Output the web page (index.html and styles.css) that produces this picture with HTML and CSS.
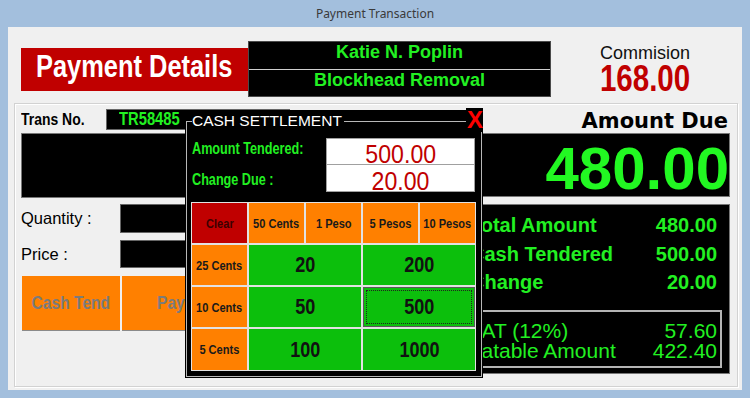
FILE: index.html
```html
<!DOCTYPE html>
<html>
<head>
<meta charset="utf-8">
<title>Payment Transaction</title>
<link rel="stylesheet" href="styles.css">
</head>
<body>
<div class="window">
  <div class="titlebar">Payment Transaction</div>
  <div class="client">
    <div class="header">
      <div class="title-box"><span class="sq sq-l">Payment Details</span></div>
      <div class="name-box">
        <div class="name-row r1">Katie N. Poplin</div>
        <div class="name-row r2">Blockhead Removal</div>
      </div>
      <div class="commission">
        <div class="comm-label">Commision</div>
        <div class="comm-value"><span class="sq">168.00</span></div>
      </div>
    </div>
    <div class="panel">
      <div class="left-col">
        <div class="trans-row">
          <span class="trans-label"><span class="sq sq-l">Trans No.</span></span>
          <div class="trans-box"><span class="sq sq-l">TR58485</span></div>
        </div>
        <div class="big-box"></div>
        <div class="field-row qty">
          <span class="field-label">Quantity :</span>
          <div class="field-box"></div>
        </div>
        <div class="field-row price">
          <span class="field-label">Price :</span>
          <div class="field-box"></div>
        </div>
        <div class="btn-row">
          <div class="obtn"><span class="sq">Cash Tend</span></div>
          <div class="obtn"><span class="sq">Pay</span></div>
        </div>
      </div>
      <div class="right-col">
        <div class="due-label">Amount Due</div>
        <div class="due-box">480.00</div>
        <div class="summary">
          <div class="sum-row"><span>Total Amount</span><span>480.00</span></div>
          <div class="sum-row"><span>Cash Tendered</span><span>500.00</span></div>
          <div class="sum-row"><span>Change</span><span>20.00</span></div>
          <div class="vat-frame">
            <div class="vat-row"><span>VAT (12%)</span><span>57.60</span></div>
            <div class="vat-row"><span>Vatable Amount</span><span>422.40</span></div>
          </div>
        </div>
      </div>
    </div>
    <div class="popup">
      <fieldset class="settle">
        <legend>CASH SETTLEMENT</legend>
        <div class="amt-row">
          <span class="amt-label"><span class="sq sq-l sq-t">Amount Tendered:</span></span>
          <div class="amt-box"><span class="sq sq-a">500.00</span></div>
        </div>
        <div class="amt-row second">
          <span class="amt-label"><span class="sq sq-l sq-t">Change Due :</span></span>
          <div class="amt-box"><span class="sq sq-a">20.00</span></div>
        </div>
        <div class="keypad">
          <div class="key clear"><span class="sq">Clear</span></div>
          <div class="key coin"><span class="sq">50 Cents</span></div>
          <div class="key coin"><span class="sq">1 Peso</span></div>
          <div class="key coin"><span class="sq">5 Pesos</span></div>
          <div class="key coin"><span class="sq">10 Pesos</span></div>
          <div class="key coin"><span class="sq">25 Cents</span></div>
          <div class="key bill"><span class="sq">20</span></div>
          <div class="key bill"><span class="sq">200</span></div>
          <div class="key coin"><span class="sq">10 Cents</span></div>
          <div class="key bill"><span class="sq">50</span></div>
          <div class="key bill focus"><span class="sq">500</span></div>
          <div class="key coin"><span class="sq">5 Cents</span></div>
          <div class="key bill"><span class="sq">100</span></div>
          <div class="key bill"><span class="sq">1000</span></div>
        </div>
      </fieldset>
      <div class="close">X</div>
    </div>
  </div>
</div>
</body>
</html>
```
FILE: styles.css
```css
html, body {
  margin: 0;
  padding: 0;
}
body {
  width: 750px;
  height: 398px;
  overflow: hidden;
  background: #a3bfdd;
  font-family: "Liberation Sans", Arial, sans-serif;
}
.window {
  height: 398px;
  display: flex;
  flex-direction: column;
}
.titlebar {
  height: 27px;
  line-height: 27px;
  text-align: center;
  font-family: "Noto Sans", "Open Sans", sans-serif;
  font-size: 12px;
  color: #3a3a3a;
}
.client {
  position: relative;
  margin: 0 8px;
  height: 363px;
  background: #f0f0f0;
}

/* condensed text (narrow face look) */
.sq {
  display: inline-block;
  white-space: nowrap;
  transform: scaleX(0.82);
  transform-origin: center;
}
.sq-l {
  transform-origin: left center;
}
.sq-t {
  transform: scaleX(0.79);
}
.sq-a {
  transform: scaleX(0.89);
}

/* header */
.header {
  display: flex;
  align-items: flex-start;
  height: 76px;
}
.title-box {
  margin: 21px 0 0 13px;
  width: 227px;
  height: 43px;
  box-sizing: border-box;
  padding: 0 0 6px 15px;
  background: #c00000;
  color: #fff;
  font-weight: bold;
  font-size: 31px;
  line-height: 37px;
  white-space: nowrap;
}
.name-box {
  margin-top: 14px;
  width: 303px;
  height: 56px;
  box-sizing: border-box;
  border: 1px solid #4a4a4a;
  background: #000;
}
.name-row {
  color: #22f022;
  font-weight: bold;
  font-size: 18px;
  line-height: 20px;
  text-align: center;
}
.r1 {
  height: 27px;
  border-bottom: 1px solid #d0d0d0;
}
.r2 {
  height: 26px;
}
.commission {
  width: 188px;
  margin-top: 16px;
  text-align: center;
}
.comm-label {
  font-size: 18px;
  line-height: 20px;
  color: #111;
}
.comm-value {
  margin-top: -1px;
  font-weight: bold;
  font-size: 36px;
  line-height: 34px;
  color: #c00000;
}

/* main panel */
.panel {
  margin: 0 4px 0 6px;
  height: 284px;
  box-sizing: border-box;
  border: 1px solid #d2d2d2;
  box-shadow: inset 1px 1px 0 #fff, 1px 1px 0 #fff;
  padding: 5px 7px 0 6px;
  display: flex;
  justify-content: space-between;
}
.left-col {
  width: 269px;
  display: flex;
  flex-direction: column;
}
.trans-row {
  display: flex;
  align-items: center;
  height: 21px;
}
.trans-label {
  width: 85px;
  flex: none;
  font-weight: bold;
  font-size: 17px;
  color: #000;
}
.trans-box {
  flex: 1;
  height: 21px;
  box-sizing: border-box;
  border: 1px solid #666;
  background: #000;
  color: #22f022;
  font-weight: bold;
  font-size: 18px;
  line-height: 19px;
  padding-left: 12px;
  overflow: hidden;
}
.big-box {
  margin-top: 3px;
  height: 65px;
  box-sizing: border-box;
  border: 1px solid #777;
  background: #000;
}
.field-row {
  display: flex;
  align-items: center;
}
.qty {
  margin-top: 6px;
  height: 29px;
}
.price {
  margin-top: 7px;
  height: 28px;
}
.field-label {
  width: 99px;
  flex: none;
  font-size: 16.5px;
  color: #000;
}
.field-box {
  flex: 1;
  height: 100%;
  box-sizing: border-box;
  border: 1px solid #666;
  background: #000;
}
.btn-row {
  margin-top: 8px;
  padding-left: 1px;
  height: 55px;
  display: flex;
  gap: 2px;
}
.obtn {
  width: 98px;
  box-sizing: border-box;
  background: #ff8000;
  border-bottom: 1px solid #8a8a8a;
  color: #7b7b7b;
  font-weight: bold;
  font-size: 19px;
  display: flex;
  align-items: center;
  justify-content: center;
}

/* right column */
.right-col {
  width: 275px;
  display: flex;
  flex-direction: column;
}
.due-label {
  padding-right: 2px;
  text-align: right;
  font-family: "DejaVu Sans", Verdana, sans-serif;
  font-weight: bold;
  font-size: 21px;
  line-height: 24px;
  color: #000;
}
.due-box {
  height: 64px;
  box-sizing: border-box;
  border: 1px solid #777;
  background: #000;
  color: #22f822;
  font-weight: bold;
  font-size: 60px;
  line-height: 60px;
  text-align: right;
  padding: 5px 0 0 0;
}
.summary {
  margin-top: 7px;
  height: 170px;
  box-sizing: border-box;
  border: 1px solid #777;
  background: #000;
  padding-top: 6px;
}
.sum-row {
  display: flex;
  justify-content: space-between;
  padding: 0 12px 0 14px;
  color: #22f022;
  font-weight: bold;
  font-size: 20px;
  line-height: 28.5px;
}
.vat-frame {
  margin: 13.5px 7px 0 5px;
  border: 2px solid #b4b4b4;
  padding: 9px 3px 5px 6px;
}
.vat-row {
  display: flex;
  justify-content: space-between;
  color: #22f022;
  font-size: 21px;
  line-height: 20px;
}

/* popup */
.popup {
  position: absolute;
  left: 177px;
  top: 83px;
  width: 298px;
  height: 268px;
  box-sizing: border-box;
  padding: 1px;
  background: #000;
}
.settle {
  margin: 0;
  min-width: 0;
  height: 266px;
  box-sizing: border-box;
  border: 1px solid #b8b8b8;
  padding: 7px 5px 0 5px;
}
.settle legend {
  padding: 0 2px 0 0;
  color: #fff;
  font-size: 15.5px;
  line-height: 20px;
}
.amt-row {
  display: flex;
  height: 27px;
}
.amt-label {
  width: 134px;
  flex: none;
  color: #22f022;
  font-weight: bold;
  font-size: 16px;
  line-height: 22px;
  white-space: nowrap;
}
.second .amt-label {
  padding-top: 4px;
}
.amt-box {
  width: 149px;
  height: 27px;
  box-sizing: border-box;
  border: 1px solid #a0a0a0;
  background: #fff;
  color: #c00000;
  font-size: 26px;
  line-height: 30px;
  text-align: center;
}
.second .amt-box {
  border-top: 0;
  line-height: 32px;
}
.keypad {
  margin: 10px 0 0 -1px;
  padding: 1px;
  width: 283px;
  display: grid;
  grid-template-columns: repeat(5, 55px);
  grid-template-rows: 40px 40px 40px 41px;
  gap: 2px;
  background: #e2e2e2;
}
.key {
  display: flex;
  align-items: center;
  justify-content: center;
  box-sizing: border-box;
  font-weight: bold;
  font-size: 13.5px;
  color: #1a1a1a;
}
.coin {
  background: #ff8000;
}
.clear {
  background: #c00000;
  color: #3c0000;
}
.bill {
  grid-column: span 2;
  background: #0cbf0c;
  font-size: 22px;
  color: #111;
}
.focus {
  border: 1px solid #5a5a5a;
  outline: 1px dotted #222;
  outline-offset: -4px;
}
.close {
  position: absolute;
  right: 0;
  top: -2px;
  padding-left: 1px;
  background: #000;
  color: #ff0000;
  font-weight: bold;
  font-size: 24px;
  line-height: 24px;
}
```
